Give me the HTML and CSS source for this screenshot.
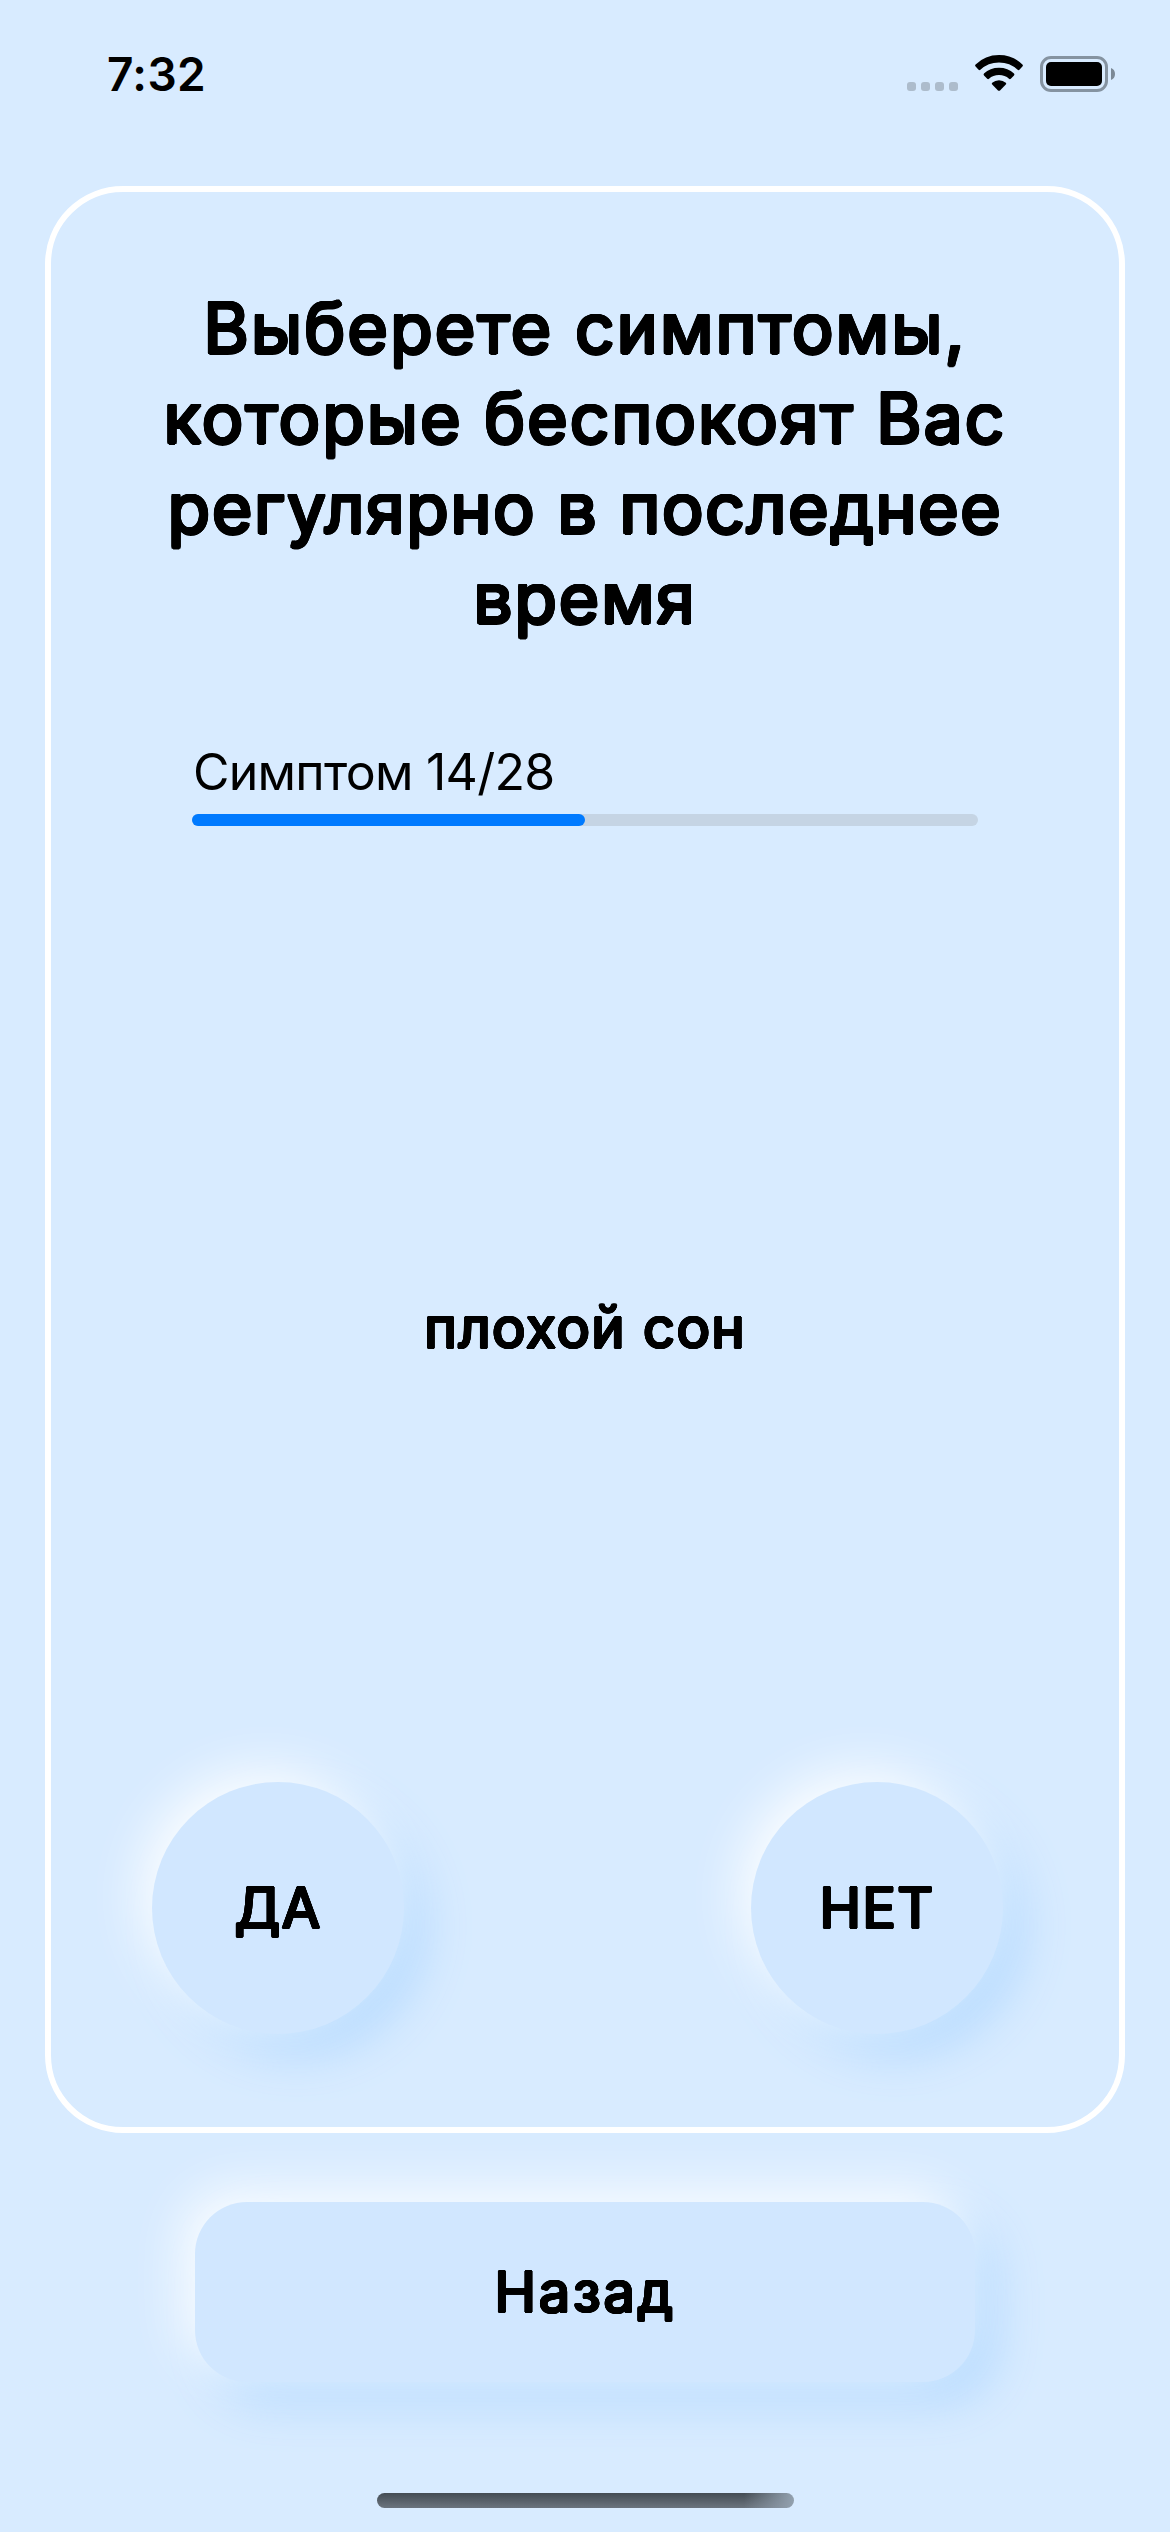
FILE: index.html
```html
<!DOCTYPE html>
<html lang="ru">
<head>
<meta charset="utf-8">
<title>Симптомы</title>
<link rel="stylesheet" href="styles.css">
</head>
<body>
<main class="screen">
  <header class="status">
    <time class="clock">7:32</time>
    <div class="indicators">
      <div class="dots"><i></i><i></i><i></i><i></i></div>
      <svg class="wifi" width="48" height="36" viewBox="0 0 48 36">
        <path d="M24 0Q38 0 47.400 9.600Q48.400 10.600 47.400 11.600L44.400 14.800Q43.600 15.600 42.600 14.700Q35 7.400 24 7.400Q13 7.400 5.400 14.700Q4.400 15.600 3.600 14.800L.6 11.600Q-.4 10.600 .6 9.600Q10 0 24 0Z"/>
        <path d="M24 12.800Q33 12.800 39 18.600Q39.900 19.500 39 20.400L35.800 23.700Q34.900 24.600 34 23.800Q30 20.100 24 20.100Q18 20.100 14 23.800Q13.100 24.600 12.200 23.700L9 20.400Q8.100 19.500 9 18.600Q15 12.800 24 12.800Z"/>
        <path d="M24 25.300Q28 25.300 30.800 27.800Q31.600 28.600 30.800 29.500L25 35.400Q24 36.300 23 35.400L17.200 29.500Q16.400 28.600 17.200 27.800Q20 25.300 24 25.300Z"/>
      </svg>
      <svg class="battery" width="76" height="36" viewBox="0 0 76 36">
        <rect x="1.500" y="1.500" width="65" height="33" rx="9.500" fill="none" stroke="#8593a1" stroke-width="3"/>
        <rect x="6" y="6" width="56" height="24" rx="5"/>
        <path d="M71 12Q75 13.500 75 18T71 24Z" fill="#7c8996"/>
      </svg>
    </div>
  </header>

  <section class="card">
    <h1 class="title rounded">
      <span class="line l1">Выберете симптомы,</span>
      <span class="line l2">которые беспокоят Вас</span>
      <span class="line l3">регулярно в последнее</span>
      <span class="line l4">время</span>
    </h1>
    <div class="progress">
      <div class="progress-label">Симптом 14/28</div>
      <div class="track"><div class="fill" style="width:50%"></div></div>
    </div>
    <p class="symptom rounded">плохой сон</p>
    <div class="answers">
      <button class="soft answer rounded">ДА</button>
      <button class="soft answer rounded">НЕТ</button>
    </div>
  </section>

  <button class="soft back rounded">Назад</button>
  <div class="home"></div>
</main>
</body>
</html>
```
FILE: styles.css
```css
* { box-sizing: border-box; }

body {
  margin: 0;
  background: #d8ebff;
  color: #000;
  font-family: Inter, "Liberation Sans", sans-serif;
}

.screen {
  display: flex;
  flex-direction: column;
  align-items: center;
  width: 1170px;
  height: 2532px;
  overflow: hidden;
}

/* Regular strokes thickened evenly in every direction give round terminals. */
.rounded {
  --r: 1.5px;
  --d: calc(var(--r) * .707);
  --a: calc(var(--r) * .924);
  --b: calc(var(--r) * .383);
  font-weight: 400;
  text-shadow:
    var(--r) 0, calc(-1 * var(--r)) 0, 0 var(--r), 0 calc(-1 * var(--r)),
    var(--d) var(--d), calc(-1 * var(--d)) var(--d),
    var(--d) calc(-1 * var(--d)), calc(-1 * var(--d)) calc(-1 * var(--d)),
    var(--a) var(--b), var(--b) var(--a),
    calc(-1 * var(--a)) var(--b), calc(-1 * var(--b)) var(--a),
    var(--a) calc(-1 * var(--b)), var(--b) calc(-1 * var(--a)),
    calc(-1 * var(--a)) calc(-1 * var(--b)), calc(-1 * var(--b)) calc(-1 * var(--a));
}

.status {
  display: flex;
  justify-content: space-between;
  align-self: stretch;
  height: 186px;
  padding: 54px 54px 0 107px;
}
.clock {
  height: 40px;
  font-size: 46px;
  font-weight: 600;
  line-height: 40px;
  letter-spacing: .4px;
}
.indicators { display: flex; height: 38px; margin-top: 1px; }
.dots { display: flex; gap: 5px; margin: 27px 17px 0 0; }
.dots i { width: 9px; height: 9px; border-radius: 3px; background: #adbccc; }
.wifi { margin-right: 17px; }
.battery { margin-top: 1px; }

.card {
  display: flex;
  flex-direction: column;
  align-items: center;
  width: 1080px;
  height: 1947px;
  border: 6px solid #fff;
  border-radius: 78px;
}
.title { margin: 91px 0 0; font-size: 69.5px; line-height: 90px; text-align: center; }
.line { display: block; white-space: nowrap; }
.l1 { letter-spacing: 2.1px; }
.l2 { letter-spacing: 2px; }
.l3 { letter-spacing: 1.6px; }
.l4 { letter-spacing: 1.8px; }

.progress { width: 786px; margin-top: 92px; }
.progress-label {
  height: 79px;
  padding-left: 1px;
  font-size: 50px;
  line-height: 74px;
  letter-spacing: -.75px;
}
.track { height: 12px; border-radius: 6px; background: #c5d4e4; }
.fill { height: 12px; border-radius: 6px; background: #007aff; }

.symptom {
  --r: 1.3px;
  margin: 465px 0 0;
  font-size: 56px;
  line-height: 74px;
  letter-spacing: 1.4px;
}

.soft {
  border: 0;
  padding: 0;
  color: #000;
  background: #d1e7ff;
  font-family: inherit;
  font-size: 56px;
  line-height: 72px;
  letter-spacing: 1.3px;
  box-shadow: -12px -12px 50px rgba(255, 255, 255, .95), 18px 18px 50px #b0d8ff;
}
.answers {
  display: flex;
  justify-content: space-between;
  width: 851px;
  margin-top: auto;
  margin-bottom: 93px;
  margin-right: 15px;
}
.answer { --r: 1.3px; width: 252px; height: 252px; border-radius: 50%; }
.back {
  --r: 1.3px;
  width: 780px;
  height: 180px;
  margin-top: 69px;
  border-radius: 52px;
  letter-spacing: 2.8px;
}

.home {
  width: 417px;
  height: 15px;
  margin-top: 111px;
  border-radius: 8px;
  background:
    linear-gradient(90deg, transparent 88%, #93a1af),
    linear-gradient(#444c54, #6b747e);
}
```
